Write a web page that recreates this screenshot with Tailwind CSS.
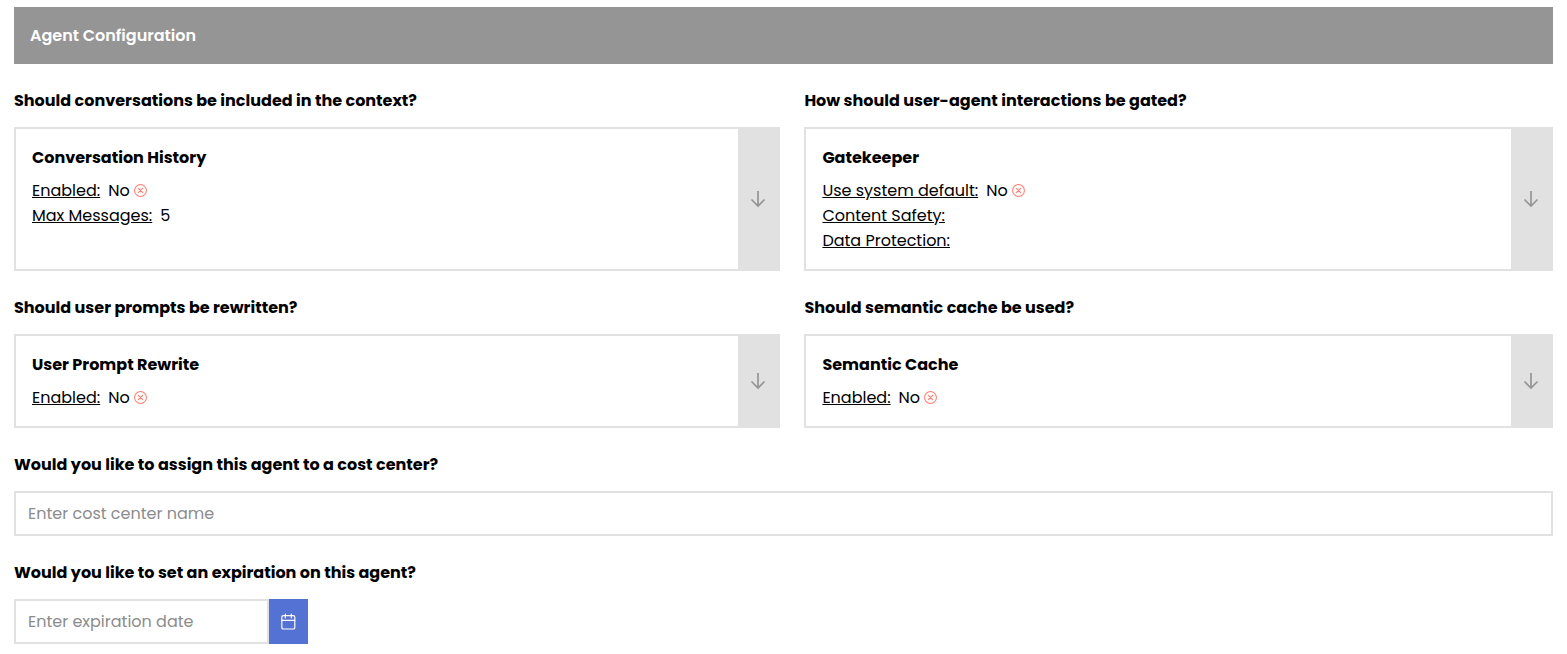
<!DOCTYPE html>
<html lang="en">
<head>
<meta charset="utf-8">
<meta name="viewport" content="width=device-width, initial-scale=1">
<title>Agent Configuration</title>
<script src="https://cdn.jsdelivr.net/npm/@tailwindcss/browser@4"></script>
</head>
<body class="bg-white font-[Poppins,Inter,sans-serif] text-[16px] leading-[25px] text-black">
<svg class="hidden" aria-hidden="true">
  <symbol id="arrow-down" viewBox="0 0 16 18"><path d="M8 1v15M1.500 9.500 8 16l6.500-6.500" fill="none" stroke="currentColor" stroke-width="1.700"/></symbol>
  <symbol id="times-circle" viewBox="0 0 14 14"><g fill="none" stroke="currentColor"><circle cx="7" cy="7" r="6.400" stroke-width="1.100"/><path d="m4.600 4.600 4.800 4.800m0-4.800L4.600 9.400" stroke-width="1.200" stroke-linecap="round"/></g></symbol>
</svg>
<main class="flex flex-col gap-6 px-[14px] py-[7px]">
  <h2 class="bg-[#959595] p-4 font-semibold text-white">Agent Configuration</h2>
  <div class="grid grid-cols-[43fr_42fr] gap-6">
    <section class="flex flex-col gap-[14px]">
      <h3 class="font-bold">Should conversations be included in the context?</h3>
      <div class="flex grow border-2 border-[#e1e1e1]">
        <div class="grow p-4">
          <h4 class="mb-2 font-bold">Conversation History</h4>
          <p class="flex items-center"><span class="mr-2 underline">Enabled:</span>No<svg class="ml-1 size-[13px] text-[#ff7c70]"><use href="#times-circle"/></svg></p>
          <p class="flex items-center"><span class="mr-2 underline">Max Messages:</span>5</p>
        </div>
        <button type="button" aria-label="Edit conversation history" class="flex w-10 shrink-0 items-center justify-center bg-[#e1e1e1] text-[#959595]"><svg class="h-[18px] w-4"><use href="#arrow-down"/></svg></button>
      </div>
    </section>
    <section class="flex flex-col gap-[14px]">
      <h3 class="font-bold">How should user-agent interactions be gated?</h3>
      <div class="flex grow border-2 border-[#e1e1e1]">
        <div class="grow p-4">
          <h4 class="mb-2 font-bold">Gatekeeper</h4>
          <p class="flex items-center"><span class="mr-2 underline">Use system default:</span>No<svg class="ml-1 size-[13px] text-[#ff7c70]"><use href="#times-circle"/></svg></p>
          <p class="underline">Content Safety:</p>
          <p class="underline">Data Protection:</p>
        </div>
        <button type="button" aria-label="Edit gatekeeper" class="flex w-10 shrink-0 items-center justify-center bg-[#e1e1e1] text-[#959595]"><svg class="h-[18px] w-4"><use href="#arrow-down"/></svg></button>
      </div>
    </section>
    <section class="flex flex-col gap-[14px]">
      <h3 class="font-bold">Should user prompts be rewritten?</h3>
      <div class="flex grow border-2 border-[#e1e1e1]">
        <div class="grow p-4">
          <h4 class="mb-2 font-bold">User Prompt Rewrite</h4>
          <p class="flex items-center"><span class="mr-2 underline">Enabled:</span>No<svg class="ml-1 size-[13px] text-[#ff7c70]"><use href="#times-circle"/></svg></p>
        </div>
        <button type="button" aria-label="Edit user prompt rewrite" class="flex w-10 shrink-0 items-center justify-center bg-[#e1e1e1] text-[#959595]"><svg class="h-[18px] w-4"><use href="#arrow-down"/></svg></button>
      </div>
    </section>
    <section class="flex flex-col gap-[14px]">
      <h3 class="font-bold">Should semantic cache be used?</h3>
      <div class="flex grow border-2 border-[#e1e1e1]">
        <div class="grow p-4">
          <h4 class="mb-2 font-bold">Semantic Cache</h4>
          <p class="flex items-center"><span class="mr-2 underline">Enabled:</span>No<svg class="ml-1 size-[13px] text-[#ff7c70]"><use href="#times-circle"/></svg></p>
        </div>
        <button type="button" aria-label="Edit semantic cache" class="flex w-10 shrink-0 items-center justify-center bg-[#e1e1e1] text-[#959595]"><svg class="h-[18px] w-4"><use href="#arrow-down"/></svg></button>
      </div>
    </section>
  </div>
  <div class="flex flex-col gap-[14px]">
    <label for="cost-center" class="font-bold">Would you like to assign this agent to a cost center?</label>
    <input id="cost-center" type="text" placeholder="Enter cost center name" class="h-[45px] w-full border-2 border-[#e1e1e1] px-3 placeholder:text-[#8c8c8c]">
  </div>
  <div class="flex flex-col gap-[14px]">
    <label for="expiration" class="font-bold">Would you like to set an expiration on this agent?</label>
    <div class="flex">
      <input id="expiration" type="text" placeholder="Enter expiration date" class="h-[45px] w-[255px] border-2 border-[#e1e1e1] px-3 placeholder:text-[#8c8c8c]">
      <button type="button" aria-label="Choose date" class="flex w-[39px] items-center justify-center bg-[#5472d4] text-white"><svg class="h-[17px] w-[15px]" viewBox="0 0 15 17" fill="none" stroke="currentColor" stroke-width="1.200" stroke-linecap="round"><rect x=".8" y="2.700" width="13" height="13.300" rx="1.600"/><path d="M.8 7.300h13M4.300 1.200v3.600M10.300 1.200v3.600"/></svg></button>
    </div>
  </div>
</main>
</body>
</html>
